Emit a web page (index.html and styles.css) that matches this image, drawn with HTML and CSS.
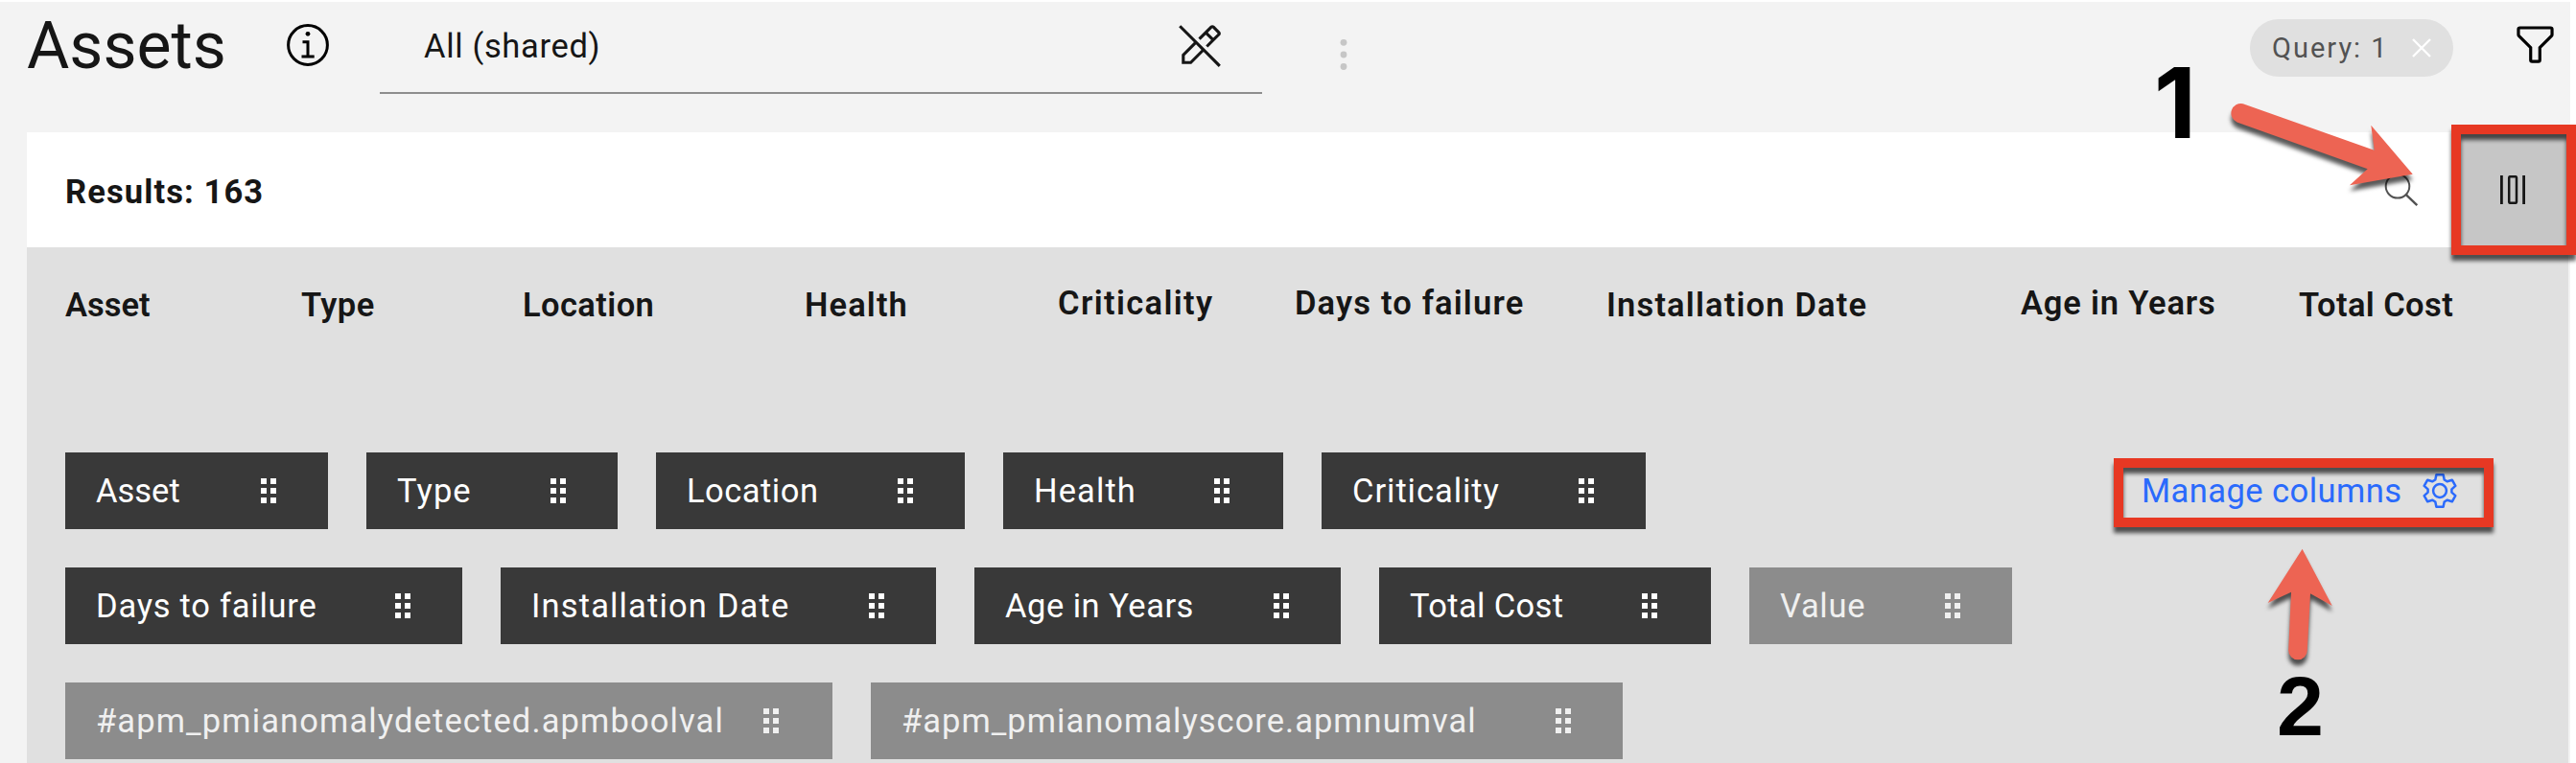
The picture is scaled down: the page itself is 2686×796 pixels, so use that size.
FILE: index.html
```html
<!DOCTYPE html>
<html lang="en">
<head>
<meta charset="utf-8">
<title>Assets</title>
<link rel="stylesheet" href="styles.css">
</head>
<body>
<svg class="defs" width="0" height="0" aria-hidden="true">
  <symbol id="drag" viewBox="0 0 16 26">
    <path d="M0 0h6v6H0zM10 0h6v6h-6zM0 10h6v6H0zM10 10h6v6h-6zM0 20h6v6H0zM10 20h6v6h-6z"/>
  </symbol>
</svg>
<div class="page">
  <header class="topbar">
    <h1 class="title">Assets</h1>
    <svg class="info" viewBox="0 0 44 44"><circle cx="22" cy="22" r="20.4" fill="none" stroke="#000" stroke-width="3"/><circle cx="22" cy="10.3" r="2.4"/><path d="M16.5 17.3h7v15.3h5.2v3H15.5v-3h5V20.200h-4z"/></svg>
    <div class="view">
      <span class="view-name">All (shared)</span>
      <svg class="edit-off" viewBox="0 0 32 32"><path d="M30 28.6L3.400 2 2 3.400l10.100 10.100L4 21.600V28h6.400l8.100-8.100L28.600 30 30 28.600zM9.600 26H6v-3.600l7.500-7.500 3.600 3.600L9.600 26zM29.400 6.200l-3.600-3.600c-.8-.8-2-.8-2.800 0l-8 8 1.400 1.400L20 8.400l3.600 3.600L20 15.600l1.400 1.400 8-8c.8-.8.8-2 0-2.800zM25 10.600L21.400 7l3-3L28 7.600 25 10.600z"/></svg>
    </div>
    <svg class="overflow" viewBox="0 0 8 34"><circle cx="4" cy="4.300" r="3.400"/><circle cx="4" cy="17" r="3.400"/><circle cx="4" cy="29.500" r="3.400"/></svg>
    <div class="tag"><span class="tag-text">Query: 1</span><svg class="close" viewBox="0 0 20 20"><path d="M1 1l18 18M19 1L1 19" stroke="#fff" stroke-width="2.400"/></svg></div>
    <svg class="filter" viewBox="0 0 32 32"><path d="M18 28h-4a2 2 0 0 1-2-2v-7.590L4.590 11A2 2 0 0 1 4 9.590V6a2 2 0 0 1 2-2h20a2 2 0 0 1 2 2v3.590A2 2 0 0 1 27.410 11L20 18.410V26a2 2 0 0 1-2 2zM6 6v3.590l8 8V26h4v-8.410l8-8V6z"/></svg>
  </header>
  <main class="panel">
    <div class="toolbar">
      <span class="results">Results: 163</span>
      <svg class="search" viewBox="0 0 36 36"><circle cx="14" cy="14.300" r="12.300" fill="none" stroke="#525252" stroke-width="2"/><path d="M22.800 23.200L34.300 34.200" stroke="#525252" stroke-width="2.400"/></svg>
      <button class="columns-btn" aria-label="Columns"><svg class="columns" viewBox="0 0 26 30"><path d="M0 0h2.800v30H0zM23.200 0H26v30h-2.800z"/><rect x="9.200" y="1.200" width="7.800" height="27.600" rx="1.200" fill="none" stroke="#161616" stroke-width="2.500"/></svg></button>
    </div>
    <div class="heads">
      <span class="h-asset">Asset</span><span class="h-type">Type</span><span class="h-location">Location</span><span class="h-health">Health</span><span class="h-criticality raised">Criticality</span><span class="h-days raised">Days to failure</span><span class="h-install">Installation Date</span><span class="h-age raised">Age in Years</span><span class="h-cost">Total Cost</span>
    </div>
    <div class="chooser">
      <div class="chips">
        <div class="chip c-asset"><span>Asset</span><svg class="drag"><use href="#drag"/></svg></div>
        <div class="chip c-type"><span>Type</span><svg class="drag"><use href="#drag"/></svg></div>
        <div class="chip c-location"><span>Location</span><svg class="drag"><use href="#drag"/></svg></div>
        <div class="chip c-health"><span>Health</span><svg class="drag"><use href="#drag"/></svg></div>
        <div class="chip c-criticality"><span>Criticality</span><svg class="drag"><use href="#drag"/></svg></div>
        <div class="chip c-days"><span>Days to failure</span><svg class="drag"><use href="#drag"/></svg></div>
        <div class="chip c-install"><span>Installation Date</span><svg class="drag"><use href="#drag"/></svg></div>
        <div class="chip c-age"><span>Age in Years</span><svg class="drag"><use href="#drag"/></svg></div>
        <div class="chip c-cost"><span>Total Cost</span><svg class="drag"><use href="#drag"/></svg></div>
        <div class="chip c-value off"><span>Value</span><svg class="drag"><use href="#drag"/></svg></div>
        <div class="chip c-detected off"><span>#apm_pmianomalydetected.apmboolval</span><svg class="drag"><use href="#drag"/></svg></div>
        <div class="chip c-score off"><span>#apm_pmianomalyscore.apmnumval</span><svg class="drag"><use href="#drag"/></svg></div>
      </div>
      <a class="manage"><span class="manage-text">Manage columns</span><svg class="gear" viewBox="0 0 36 36"><path d="M14.400 1.300h7.200l1.100 5.200 3.100 1.800 5-1.600 3.500 6.200-3.900 3.500v3.200l3.900 3.500-3.500 6.200-5-1.600-3.100 1.800-1.100 5.200h-7.200l-1.100-5.200-3.100-1.800-5 1.600-3.500-6.200 3.900-3.500v-3.200l-3.900-3.500 3.500-6.200 5 1.600 3.100-1.800z" stroke-linejoin="round"/><circle cx="18" cy="18" r="6.900"/></svg></a>
    </div>
  </main>
</div>
<div class="mark mark-button"></div>
<div class="mark mark-manage"></div>
<svg class="arrows" viewBox="0 0 2686 796">
  <path d="M2338.800 108.200L2475.700 156.700 2472.300 130.700 2515.700 181.700 2450 193.300 2468.700 176.300 2332.500 127.500A10.200 10.200 0 0 1 2338.800 108.200z"/>
  <path d="M2400.600 572.700L2431.800 632 2409 619.300 2405.800 678.500A9.800 9.800 0 0 1 2386.200 678.500L2389 617.700 2364.700 629z"/>
</svg>
<span class="step step-one">1</span>
<span class="step step-two">2</span>
</body>
</html>
```
FILE: styles.css
```css
* { box-sizing: border-box; }
body { margin: 0; width: 2686px; height: 796px; overflow: hidden; position: relative; background: #fff; color: #161616; font-family: Roboto, "Liberation Sans", sans-serif; font-size: 34.5px; line-height: 40px; }
svg { display: block; flex: none; }
.defs { position: absolute; }
.page { width: 2680px; height: 796px; padding: 2px 2px 0 28px; background: linear-gradient(#fff 2px, #f3f3f3 2px); }
.topbar { display: flex; align-items: flex-start; height: 136px; }
.title { margin: 6px 0 0; width: 271px; font-size: 68px; line-height: 80px; font-weight: 400; white-space: nowrap; }
.info { width: 44px; height: 44px; margin-top: 23px; }
.view { display: flex; justify-content: space-between; width: 920px; height: 96px; margin-left: 53px; padding: 0 40px 0 46px; border-bottom: 2px solid #8d8d8d; }
.view-name { margin-top: 26px; letter-spacing: 0.65px; }
.edit-off { width: 50px; height: 50px; margin-top: 21px; fill: #161616; }
.overflow { width: 8px; height: 34px; margin: 38px 0 0 81px; fill: #c6c6c6; }
.tag { display: flex; align-items: center; justify-content: space-between; width: 212px; height: 60px; margin: 18px 0 0 941px; padding: 0 23px 0 23px; border-radius: 30px; background: #e0e0e0; color: #525252; font-size: 29px; white-space: nowrap; }
.tag-text { letter-spacing: 2px; }
.close { width: 20px; height: 20px; }
.filter { width: 51px; height: 51px; margin: 19px 0 0 60px; }
.toolbar { display: flex; align-items: center; height: 120px; padding-left: 40px; background: #fff; }
.results { flex: 1; padding-top: 4px; font-weight: 700; letter-spacing: 1.1px; }
.search { width: 36px; height: 36px; margin: 0 36px 0 0; }
.columns-btn { width: 120px; height: 120px; padding: 0; border: 0; background: #c6c6c6; display: grid; place-items: center; }
.columns { width: 26px; height: 30px; fill: #161616; margin-left: 4px; }
.heads { display: grid; grid-template-columns: 246px 231px 294px 264px 247px 325px 432px 290px 1fr; height: 214px; padding: 40px 0 0 40px; background: #e0e0e0; font-weight: 600; white-space: nowrap; }
.h-type, .h-location { letter-spacing: 0.4px; }
.h-health { letter-spacing: 1.1px; }
.h-criticality { letter-spacing: 1.35px; }
.h-days { letter-spacing: 1.15px; }
.h-install { letter-spacing: 1.15px; }
.h-age { letter-spacing: 0.8px; }
.h-cost { letter-spacing: 0.4px; }
.raised { margin-top: -2px; }
.chooser { display: flex; height: 324px; padding-left: 40px; background: #e0e0e0; }
.chips { display: flex; flex-wrap: wrap; align-content: flex-start; gap: 40px; width: 2040px; }
.chip { display: flex; align-items: center; justify-content: space-between; height: 80px; padding: 0 54px 0 32px; background: #393939; color: #fff; white-space: nowrap; }
.off { background: #8c8c8c; color: #f0f0f0; }
.drag { width: 16px; height: 26px; fill: currentColor; }
.c-asset { width: 274px; }
.c-type { width: 262px; letter-spacing: 1.1px; }
.c-location { width: 322px; letter-spacing: 0.5px; }
.c-health { width: 292px; padding-right: 56px; letter-spacing: 1.1px; }
.c-criticality { width: 338px; margin-right: 300px; letter-spacing: 0.95px; }
.c-days { width: 414px; letter-spacing: 0.75px; }
.c-install { width: 454px; letter-spacing: 1.15px; }
.c-age { width: 382px; letter-spacing: 0.5px; }
.c-cost { width: 346px; padding-right: 56px; letter-spacing: 0.35px; }
.c-value { width: 274px; letter-spacing: 0.7px; }
.c-detected { width: 800px; padding-right: 56px; letter-spacing: 1.12px; }
.c-score { width: 784px; letter-spacing: 1.02px; }
.manage { display: flex; align-items: center; justify-content: space-between; width: 329px; height: 80px; margin-left: 125px; color: #2a6afc; white-space: nowrap; }
.manage-text { letter-spacing: 0.45px; }
.gear { width: 36px; height: 36px; fill: none; stroke: #2a6afc; stroke-width: 2.5; }
.mark { position: absolute; border: 10px solid #e73823; filter: drop-shadow(0 6px 2px rgba(0,0,0,.65)); }
.mark-button { left: 2556px; top: 130px; width: 130px; height: 136px; }
.mark-manage { left: 2204px; top: 478px; width: 396px; height: 72px; }
.arrows { position: absolute; left: 0; top: 0; width: 2686px; height: 796px; fill: #ed6453; filter: drop-shadow(0 6px 2px rgba(0,0,0,.65)); }
.step { position: absolute; color: #000; font-weight: 700; line-height: 1; }
.step-one { left: 2246px; top: 56px; font-family: Inter, sans-serif; font-size: 102px; font-weight: 700; }
.step-two { left: 2374px; top: 693px; font-family: "Liberation Sans", Arial, sans-serif; font-size: 88px; }
```
